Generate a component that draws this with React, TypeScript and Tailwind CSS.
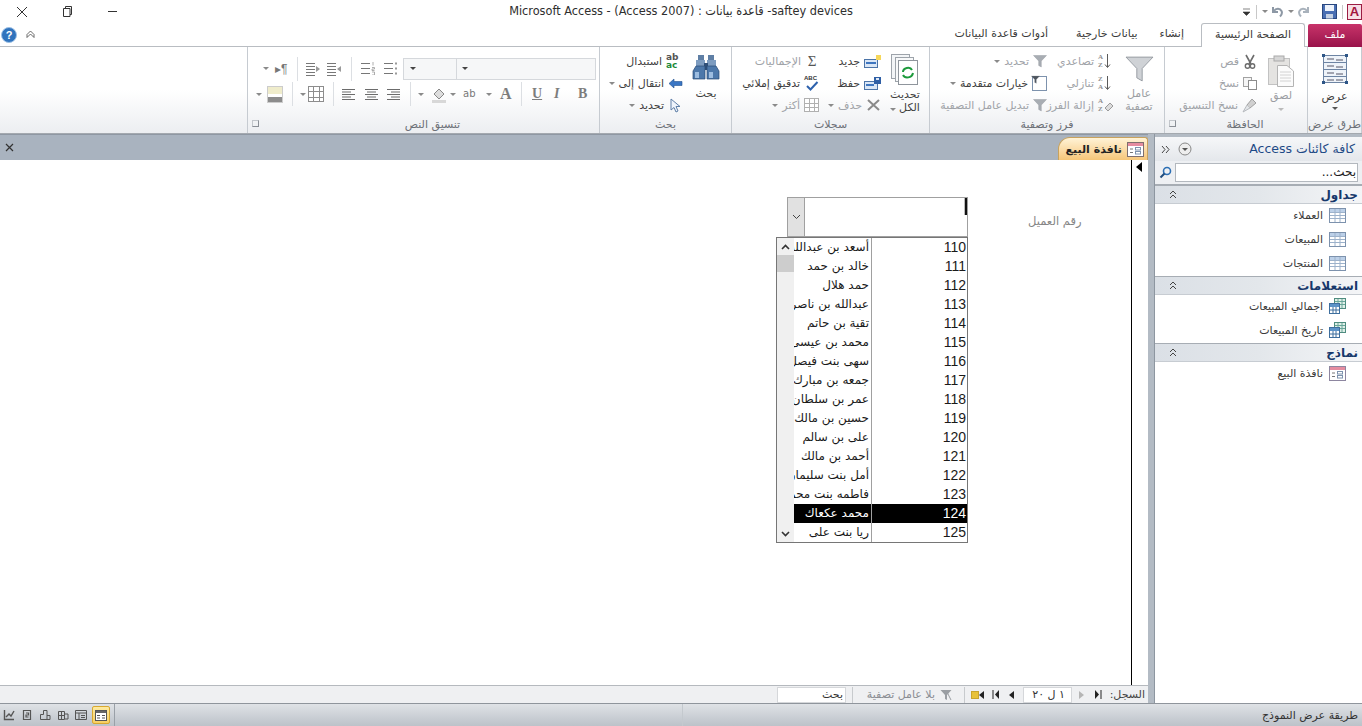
import type { ReactNode } from "react"

const ar = "font-['DejaVu_Sans','Noto_Sans',sans-serif]"

function Caret({ className = "" }: { className?: string }) {
  return <span className={`inline-block shrink-0 w-0 h-0 border-x-[3px] border-x-transparent border-t-[3px] border-t-[#8a8a8a] ${className}`} />
}

function Sep({ className = "" }: { className?: string }) {
  return <span className={`inline-block shrink-0 w-px h-[24px] bg-[#dcdfe3] ${className}`} />
}

function Ico({ w = 16, h = 16, children, className = "" }: { w?: number; h?: number; children: ReactNode; className?: string }) {
  return (
    <svg width={w} height={h} viewBox={`0 0 ${w} ${h}`} fill="none" className={`shrink-0 ${className}`}>
      {children}
    </svg>
  )
}

function Lines({ kind }: { kind: "l" | "c" | "r" }) {
  const rows: [number, number][] =
    kind === "l" ? [[1, 14], [1, 10], [1, 14], [1, 10], [1, 14]] : kind === "r" ? [[1, 14], [5, 14], [1, 14], [5, 14], [1, 14]] : [[1, 14], [3, 12], [1, 14], [3, 12], [1, 14]]
  return (
    <Ico w={15} h={13}>
      {rows.map(([a, b], i) => (
        <path key={i} d={`M${a} ${1.5 + i * 2.5}H${b}`} stroke="#6b6b6b" />
      ))}
    </Ico>
  )
}

function IndentIcon({ dir }: { dir: "in" | "out" }) {
  return (
    <Ico w={16} h={14}>
      <path d="M1 1.5H10M1 4.5H10M1 7.5H10M1 10.5H10M1 13.5H10" stroke="#777" />
      <path d={dir === "in" ? "M11 4L15 7L11 10Z" : "M15 4L11 7L15 10Z"} fill="#9a9a9a" />
    </Ico>
  )
}

function ListIcon({ dots }: { dots: boolean }) {
  return (
    <Ico w={16} h={13}>
      <path d="M1 1.5H10M1 6.5H10M1 11.5H10" stroke="#777" />
      {dots ? (
        <path d="M12 0.5H14V2.5H12ZM12 5.5H14V7.5H12ZM12 10.5H14V12.5H12Z" fill="#999" />
      ) : (
        <path d="M13 0V3.5M12 5.5H14.5V7H12V8.5H14.5M12 10H14.5V13H12" stroke="#999" strokeWidth=".8" />
      )}
    </Ico>
  )
}

function Grid({ w = 16, h = 16, color = "#8d8d8d" }: { w?: number; h?: number; color?: string }) {
  return (
    <Ico w={w} h={h}>
      <rect x=".5" y=".5" width={w - 1} height={h - 1} fill="#fff" stroke={color} />
      <path d={`M${Math.round(w / 3) + 0.5} 1V${h - 1}M${Math.round((2 * w) / 3) + 0.5} 1V${h - 1}M1 ${Math.round(h / 3) + 0.5}H${w - 1}M1 ${Math.round((2 * h) / 3) + 0.5}H${w - 1}`} stroke={color} />
    </Ico>
  )
}

function TableIcon() {
  return (
    <Ico w={17} h={15}>
      <rect x=".5" y=".5" width="16" height="14" fill="#fff" stroke="#7d92ad" />
      <rect x="1" y="1" width="15" height="3" fill="#bcd0e8" />
      <path d="M6 1V14M11 1V14M1 4.5H16M1 7.5H16M1 10.5H16" stroke="#9db2cb" />
    </Ico>
  )
}

function QueryIcon() {
  return (
    <Ico w={17} h={16}>
      <rect x="5.5" y=".5" width="11" height="10" fill="#dff0e8" stroke="#4f8c80" />
      <path d="M6 3.5H16M9 1V10M13 1V10M6 6.5H16" stroke="#6aa69a" />
      <rect x=".5" y="5.5" width="10" height="10" fill="#fff" stroke="#3e6f9e" />
      <rect x="1" y="6" width="9" height="3" fill="#5c93c8" />
      <path d="M4 9V15M7 9V15M1 12H10" stroke="#3e6f9e" />
    </Ico>
  )
}

function FormIcon({ active = false }: { active?: boolean }) {
  return (
    <Ico w={17} h={15}>
      <rect x=".5" y=".5" width="16" height="14" fill="#fff" stroke={active ? "#7d6f6f" : "#8d86a0"} />
      <rect x="1" y="1" width="15" height="3" fill="#e58ca0" />
      <path d="M3 7H6M3 10.5H6" stroke="#777" />
      <rect x="8.5" y="5.5" width="5" height="2.5" stroke="#7d92ad" />
      <rect x="8.5" y="9.5" width="5" height="2.5" stroke="#7d92ad" />
    </Ico>
  )
}

function Funnel({ size = 14, color = "#a8adb3" }: { size?: number; color?: string }) {
  return (
    <svg width={size} height={size} viewBox="0 0 14 14" className="shrink-0">
      <path d="M.5 1.5H13.5L8.3 7V13L5.7 11.5V7Z" fill={color} stroke="#8a9097" strokeWidth=".4" />
    </svg>
  )
}

function SortIcon({ up, eraser }: { up: boolean; eraser?: boolean }) {
  return (
    <span className={`flex items-center gap-px w-[16px] shrink-0 ${ar}`}>
      <span className="flex flex-col text-[7px] leading-[8px] font-bold text-[#8f8f8f] font-['Liberation_Serif',serif]">
        <span>{up ? "A" : "Z"}</span>
        <span>{up ? "Z" : "A"}</span>
      </span>
      {eraser ? (
        <Ico w={9} h={14}>
          <path d="M1 10L6 5L9 8L4 13Z" fill="#dcdcdc" stroke="#9a9a9a" />
        </Ico>
      ) : (
        <Ico w={7} h={16}>
          <path d="M3.5 1V14M1 11.5L3.5 14.5L6 11.5" stroke="#5a5a5a" />
        </Ico>
      )}
    </span>
  )
}

function Group({ width, label, launcher, children }: { width: string; label: string; launcher?: boolean; children: ReactNode }) {
  return (
    <div className={`${width} shrink-0 flex flex-col border-r border-[#c6cbd1]`}>
      <div className="flex-1 min-h-0 relative">{children}</div>
      <div className={`h-[18px] relative flex items-center justify-center ${launcher ? "pl-[18px]" : ""}`}>
        {launcher && (
          <span className="absolute left-[4px] top-[5px] w-[7px] h-[7px] border border-[#c2c6cb] border-r-[#8a8f96] border-b-[#8a8f96]" />
        )}
        <span dir="rtl" className="text-[11px] leading-none text-[#6c7077]">
          {label}
        </span>
      </div>
    </div>
  )
}

function RItem({ text, icon, arrow, dim }: { text: string; icon: ReactNode; arrow?: boolean; dim?: boolean }) {
  return (
    <div className="h-[22px] flex items-center gap-[4px]">
      {arrow && <Caret />}
      <span dir="rtl" className={`text-[11px] leading-none whitespace-nowrap ${dim ? "text-[#a0a3a8]" : "text-[#3f3f3f]"}`}>
        {text}
      </span>
      {icon}
    </div>
  )
}

function TitleBar() {
  return (
    <div className="h-[23px] shrink-0 grid grid-cols-[140px_1fr_140px] items-center">
      <div className="flex items-center">
        <Ico w={12} h={12} className="ml-[16px]">
          <path d="M1 1L11 11M11 1L1 11" stroke="#333" />
        </Ico>
        <Ico w={11} h={11} className="ml-[35px]">
          <path d="M2.5 2.5V.5H8.5V8.5H7M.5 2.5H7V10.5H.5Z" stroke="#333" />
        </Ico>
        <span className="ml-[34px] w-[9px] h-px bg-[#333]" />
      </div>
      <div dir="ltr" className="text-center text-[12.6px] text-[#2e2e2e] whitespace-nowrap font-['DejaVu_Sans_Condensed','DejaVu_Sans',sans-serif]">
        Microsoft Access - (Access 2007) : قاعدة بيانات -saftey devices
      </div>
      <div className="flex items-center justify-end">
        <Ico w={7} h={8}>
          <path d="M0 1H7M0 4H7L3.5 7.5Z" fill="#333" stroke="#333" strokeWidth=".6" />
        </Ico>
        <span className="ml-[6px] w-px h-[14px] bg-[#c8c8c8]" />
        <Caret className="ml-[5px]" />
        <Ico w={14} h={13} className="ml-[2px]">
          <path d="M3 2V7H8M3.5 6.5C6 3 10 3 11.5 6C12.5 8 11.5 10 10 11.5" stroke="#8d98a5" strokeWidth="2" />
        </Ico>
        <Caret className="ml-[4px]" />
        <Ico w={14} h={13} className="ml-[3px]">
          <path d="M11 2V7H6M10.5 6.5C8 3 4 3 2.5 6C1.5 8 2.5 10 4 11.5" stroke="#a9b2bc" strokeWidth="2" />
        </Ico>
        <Ico w={15} h={15} className="ml-[11px]">
          <rect x=".5" y=".5" width="14" height="14" fill="#4a6fb3" stroke="#29477f" />
          <rect x="3" y="1" width="9" height="6" fill="#eef3fb" />
          <rect x="4" y="10" width="7" height="4.5" fill="#c7d2e3" />
        </Ico>
        <span className="ml-[5px] w-px h-[14px] bg-[#c8c8c8]" />
        <span className="ml-[4px] w-[15px] h-[16px] border border-[#9c1d43] bg-[#f6dfe6] text-[#a3123e] text-[13px] leading-[14px] font-bold text-center font-['Liberation_Sans',sans-serif]">
          A
        </span>
      </div>
    </div>
  )
}

function Tabs() {
  return (
    <div className="h-[24px] shrink-0 flex items-end border-b border-[#b9bdc2] relative">
      <div className="flex items-center self-center pl-[1px]">
        <span className="w-[16px] h-[16px] rounded-full bg-[#2f73bd] border border-[#9cc0e6] text-white text-[11px] leading-[14px] font-bold text-center font-['Liberation_Sans',sans-serif]">
          ?
        </span>
        <Ico w={9} h={9} className="ml-[9px]">
          <path d="M1 4.5L4.5 1L8 4.5V7.5L4.5 4L1 7.5Z" fill="#fff" stroke="#444" strokeWidth=".8" />
        </Ico>
      </div>
      <div dir="rtl" className="ml-auto flex items-end text-[11px] text-[#3b3b3b] h-full">
        <span className="w-[54px] h-[23px] rounded-t-[2px] bg-gradient-to-b from-[#c8336a] to-[#99124a] text-white flex items-center justify-center mb-[-1px]">
          ملف
        </span>
        <span className="w-[104px] h-[24px] mr-[3px] mb-[-1px] rounded-t-[3px] border border-b-0 border-[#b9bdc2] bg-white flex items-center justify-center">
          الصفحة الرئيسية
        </span>
        <span className="h-[23px] mr-[17px] flex items-center">إنشاء</span>
        <span className="h-[23px] mr-[22px] flex items-center">بيانات خارجية</span>
        <span className="h-[23px] mr-[28px] flex items-center">أدوات قاعدة البيانات</span>
      </div>
    </div>
  )
}

function Ribbon() {
  const letter = "text-[14px] leading-none font-bold text-[#7d7d7d] font-['Liberation_Serif',serif]"
  return (
    <div className={`h-[87px] shrink-0 flex bg-gradient-to-b from-white via-white to-[#eceef1] border-b border-[#a4a9af] ${ar}`}>
      <div className="flex-1 border-r border-[#c6cbd1]" />

      <Group width="w-[352px]" label="تنسيق النص" launcher>
        <div className="pt-[9px]">
          <div className="h-[25px] flex items-center">
            <Caret className="ml-[15px]" />
            <span className="ml-[6px] w-[14px] text-[12px] leading-none text-[#777] font-['Liberation_Sans',sans-serif]">▸¶</span>
            <Sep className="ml-[8px]" />
            <span className="ml-[7px]"><IndentIcon dir="in" /></span>
            <span className="ml-[5px]"><IndentIcon dir="out" /></span>
            <Sep className="ml-[9px]" />
            <span className="ml-[8px]"><ListIcon dots={false} /></span>
            <span className="ml-[7px]"><ListIcon dots /></span>
            <div className="ml-[4px] w-[54px] h-[22px] border border-[#d5d8dc] bg-[#f6f7f8] flex items-center pl-[6px]">
              <Caret className="border-t-[#444]" />
            </div>
            <div className="w-[139px] h-[22px] border border-l-0 border-[#d5d8dc] bg-[#f6f7f8] flex items-center pl-[5px]">
              <Caret className="border-t-[#444]" />
            </div>
          </div>
          <div className="h-[26px] flex items-center">
            <Caret className="ml-[8px]" />
            <span className="ml-[5px] w-[16px] h-[17px] border border-[#ccc] bg-[linear-gradient(#efeccb_0_50%,#fff_50%_70%,#8c8c8c_70%)]" />
            <Sep className="ml-[9px]" />
            <Caret className="ml-[7px]" />
            <span className="ml-[2px]"><Grid w={16} h={16} /></span>
            <Sep className="ml-[9px]" />
            <span className="ml-[7px]"><Lines kind="l" /></span>
            <span className="ml-[8px]"><Lines kind="c" /></span>
            <span className="ml-[7px]"><Lines kind="r" /></span>
            <Sep className="ml-[9px]" />
            <Caret className="ml-[7px]" />
            <Ico w={16} h={17} className="ml-[7px]">
              <path d="M3 8L8 3L13 8L8 13Z" fill="#ddd" stroke="#888" />
              <rect x="1" y="14" width="14" height="3" fill="#d8d8d8" />
            </Ico>
            <Caret className="ml-[3px]" />
            <span className="ml-[7px] w-[16px] text-[10px] leading-none text-[#777]">ab</span>
            <Caret className="ml-[7px]" />
            <span className="ml-[8px] w-[12px] text-[16px] leading-none font-bold text-[#7d7d7d] font-['Liberation_Serif',serif]">A</span>
            <Sep className="ml-[9px]" />
            <span className={`ml-[10px] w-[10px] underline ${letter}`}>U</span>
            <span className={`ml-[12px] w-[8px] italic ${letter}`}>I</span>
            <span className={`ml-[16px] w-[10px] ${letter}`}>B</span>
          </div>
        </div>
      </Group>

      <Group width="w-[132px]" label="بحث">
        <div className="flex pt-[3px] pl-[5px]">
          <div className="flex flex-col items-end w-[78px]">
            <RItem
              text="استبدال"
              icon={
                <span className="w-[17px] text-[9px] leading-[8px] font-bold text-[#555] shrink-0">
                  ab
                  <br />
                  <span className="text-[#1d8a3a]">ac</span>
                </span>
              }
            />
            <RItem
              text="انتقال إلى"
              arrow
              icon={
                <Ico w={15} h={11}>
                  <path d="M1 5.5L6 1V3.5H14V7.5H6V10Z" fill="#3a76c4" stroke="#24528f" strokeWidth=".6" />
                </Ico>
              }
            />
            <RItem
              text="تحديد"
              arrow
              icon={
                <Ico w={15} h={15}>
                  <path d="M3 1V12L6 9.5L8 14L10 13L8 8.5H12Z" fill="#eef3fb" stroke="#5f7fa8" />
                </Ico>
              }
            />
          </div>
          <div className="flex flex-col items-center ml-[3px] pt-[4px] w-[40px]">
            <Ico w={28} h={26}>
              <rect x="6" y="1" width="6" height="5" fill="#5f7fa5" />
              <rect x="16" y="1" width="6" height="5" fill="#5f7fa5" />
              <rect x="4" y="6" width="9" height="7" fill="#7d9cc0" />
              <rect x="15" y="6" width="9" height="7" fill="#7d9cc0" />
              <rect x="12" y="9" width="4" height="7" fill="#2f4f78" />
              <path d="M4 12H13V25H1V17Z" fill="#4d78aa" stroke="#284a75" strokeWidth=".7" />
              <path d="M15 12H24L27 17V25H15Z" fill="#4d78aa" stroke="#284a75" strokeWidth=".7" />
              <rect x="3" y="18" width="4" height="6" fill="#9dbde0" />
              <rect x="17" y="18" width="4" height="6" fill="#9dbde0" />
            </Ico>
            <span className="text-[11px] mt-[8px] leading-none text-[#3f3f3f]">بحث</span>
          </div>
        </div>
      </Group>

      <Group width="w-[198px]" label="سجلات">
        <div className="flex pt-[3px] pl-[21px]">
          <div className="flex flex-col items-end w-[66px]">
            <RItem text="الإجماليات" dim icon={<span className="w-[14px] text-center text-[15px] leading-none text-[#555] font-['Liberation_Serif',serif]">Σ</span>} />
            <RItem
              text="تدقيق إملائي"
              icon={
                <span className="relative w-[15px] h-[16px] shrink-0">
                  <span className="absolute left-0 top-0 text-[6px] leading-none font-bold text-[#333] font-['Liberation_Sans',sans-serif]">ABC</span>
                  <Ico w={14} h={10} className="absolute left-[1px] top-[6px]">
                    <path d="M2 5L5.5 8.5L12.5 1" stroke="#2e62ad" strokeWidth="2" />
                  </Ico>
                </span>
              }
            />
            <RItem text="أكثر" dim arrow icon={<Grid w={15} h={14} color="#b0b0b0" />} />
          </div>
          <div className="flex flex-col items-end w-[62px]">
            <RItem
              text="جديد"
              icon={
                <Ico w={17} h={13}>
                  <rect x=".5" y="4.5" width="13" height="8" fill="#dbe7f6" stroke="#4c74a8" />
                  <rect x="2" y="7" width="10" height="2" fill="#3e76c0" />
                  <rect x="12" y="0" width="5" height="5" fill="#f6d75a" />
                </Ico>
              }
            />
            <RItem
              text="حفظ"
              icon={
                <Ico w={17} h={13}>
                  <rect x=".5" y="4.5" width="13" height="8" fill="#dbe7f6" stroke="#4c74a8" />
                  <rect x="2" y="7" width="8" height="2" fill="#3e76c0" />
                  <rect x="10" y="0" width="7" height="7" fill="#2f5fa5" />
                  <rect x="12" y="1" width="3" height="2" fill="#dfe8f5" />
                </Ico>
              }
            />
            <RItem
              text="حذف"
              dim
              arrow
              icon={
                <Ico w={15} h={14}>
                  <path d="M2 2L13 12M13 2L2 12" stroke="#8a8a8a" strokeWidth="2" />
                </Ico>
              }
            />
          </div>
          <div className="flex flex-col items-center pt-[3px] w-[48px]">
            <Ico w={30} h={32}>
              <rect x="1.5" y="1.5" width="18" height="24" fill="#f3f5f7" stroke="#9da3aa" />
              <rect x="5.5" y="4.5" width="18" height="24" fill="#f8f9fa" stroke="#9da3aa" />
              <rect x="8.5" y="7.5" width="19" height="24" fill="#fff" stroke="#8f959c" />
              <path d="M13 19C13 15 20 13 22 17M23 20C22 25 15 26 13 22" stroke="#1d9a3c" strokeWidth="2" />
            </Ico>
            <span dir="rtl" className="text-[11px] leading-[13px] text-center text-[#3f3f3f] mt-[3px]">
              تحديث
              <br />
              الكل
              <Caret className="mr-[3px]" />
            </span>
          </div>
        </div>
      </Group>

      <Group width="w-[235px]" label="فرز وتصفية">
        <div className="flex pt-[3px] pl-[9px]">
          <div className="flex flex-col items-end w-[108px]">
            <RItem text="تحديد" dim arrow icon={<Funnel />} />
            <RItem
              text="خيارات متقدمة"
              arrow
              icon={
                <span className="relative w-[15px] h-[15px] shrink-0 border border-[#7d92ad] bg-[#fff]">
                  <span className="absolute left-[-2px] top-[-2px]"><Funnel size={9} color="#4d555e" /></span>
                </span>
              }
            />
            <RItem text="تبديل عامل التصفية" dim icon={<Funnel />} />
          </div>
          <div className="flex flex-col items-end w-[67px]">
            <RItem text="تصاعدي" dim icon={<SortIcon up />} />
            <RItem text="تنازلي" dim icon={<SortIcon up={false} />} />
            <RItem text="إزالة الفرز" dim icon={<SortIcon up eraser />} />
          </div>
          <div className="flex flex-col items-center ml-[4px] pt-[4px] w-[42px]">
            <Funnel size={29} color="#cfd2d6" />
            <span dir="rtl" className="text-[11px] leading-[13px] text-center text-[#9b9ea3] mt-[4px]">
              عامل
              <br />
              تصفية
            </span>
          </div>
        </div>
      </Group>

      <Group width="w-[143px]" label="الحافظة" launcher>
        <div className="flex pt-[3px] pl-[6px]">
          <div className="flex flex-col items-end w-[86px]">
            <RItem
              text="قص"
              dim
              icon={
                <Ico w={14} h={15}>
                  <path d="M3 1L8 10M11 1L6 10" stroke="#6d6d6d" strokeWidth="1.6" />
                  <circle cx="4.5" cy="12" r="2.2" stroke="#6d6d6d" strokeWidth="1.4" />
                  <circle cx="9.5" cy="12" r="2.2" stroke="#6d6d6d" strokeWidth="1.4" />
                </Ico>
              }
            />
            <RItem
              text="نسخ"
              dim
              icon={
                <Ico w={14} h={13}>
                  <rect x=".5" y=".5" width="8" height="9" fill="#f6f6f6" stroke="#a2a2a2" />
                  <rect x="5.5" y="3.5" width="8" height="9" fill="#fff" stroke="#8c8c8c" />
                </Ico>
              }
            />
            <RItem
              text="نسخ التنسيق"
              dim
              icon={
                <Ico w={15} h={15}>
                  <path d="M10 1L14 5L8 10L5 7Z" fill="#d0d0d0" stroke="#a0a0a0" />
                  <path d="M5 7L1 14L8 10" fill="#e4e7ea" stroke="#b5b9bd" />
                </Ico>
              }
            />
          </div>
          <div className="flex flex-col items-center ml-[2px] pt-[5px] w-[44px]">
            <Ico w={28} h={32}>
              <rect x="1.5" y="3.5" width="21" height="26" fill="#e4e3e1" stroke="#c2c2c2" />
              <rect x="7" y="1" width="10" height="5" fill="#d6d6d6" stroke="#aaa" />
              <path d="M10.5 10.5H20L26.5 16V31.5H10.5Z" fill="#fbfbfb" stroke="#b4b4b4" />
              <path d="M13 17H24M13 20H24M13 23H24M13 26H24" stroke="#d2d2d2" />
            </Ico>
            <span className="text-[11px] leading-none text-[#9b9ea3] mt-[3px]">لصق</span>
            <Caret className="mt-[7px] border-t-[#bbb]" />
          </div>
        </div>
      </Group>

      <Group width="w-[54px]" label="طرق عرض">
        <div className="flex flex-col items-center pt-[7px]">
          <Ico w={26} h={30}>
            <rect x="1.5" y="1.5" width="23" height="27" fill="#eef3f9" stroke="#6d84a3" />
            <path d="M2 8.5H24M2 15.5H24M2 22.5H24" stroke="#6d84a3" />
            <path d="M5 5H12M14 6H21M5 12H12M14 13H21M5 19H12M14 20H21M5 26H12M14 26H21" stroke="#556" />
            <rect x="0" y="0" width="3" height="3" fill="#2e5687" />
            <rect x="23" y="0" width="3" height="3" fill="#2e5687" />
            <rect x="0" y="27" width="3" height="3" fill="#2e5687" />
            <rect x="23" y="27" width="3" height="3" fill="#2e5687" />
          </Ico>
          <span className="text-[11px] leading-none text-[#3f3f3f] mt-[7px]">عرض</span>
          <Caret className="mt-[5px] border-t-[#555]" />
        </div>
      </Group>
    </div>
  )
}

const rows: [string, string][] = [
  ["110", "أسعد بن عبدالله"],
  ["111", "خالد بن حمد"],
  ["112", "حمد هلال"],
  ["113", "عبدالله بن ناصر"],
  ["114", "تقية بن حاتم"],
  ["115", "محمد بن عيسى"],
  ["116", "سهى بنت فيصل"],
  ["117", "جمعه بن مبارك"],
  ["118", "عمر بن سلطان"],
  ["119", "حسين بن مالك"],
  ["120", "على بن سالم"],
  ["121", "أحمد بن مالك"],
  ["122", "أمل بنت سليمان"],
  ["123", "فاطمه بنت محمد"],
  ["124", "محمد عكعاك"],
  ["125", "ريا بنت على"],
]

function Dropdown() {
  return (
    <div className="absolute left-[776px] top-[77px] w-[192px] h-[306px] border border-[#767676] bg-white flex">
      <div className="w-[17px] shrink-0 bg-[#f0f0f0] flex flex-col">
        <div className="h-[17px] flex items-center justify-center">
          <Ico w={9} h={6}>
            <path d="M1 5L4.5 1.5L8 5" stroke="#333" strokeWidth="1.6" />
          </Ico>
        </div>
        <div className="h-[17px] bg-[#cdcdcd]" />
        <div className="flex-1" />
        <div className="h-[17px] flex items-center justify-center">
          <Ico w={9} h={6}>
            <path d="M1 1L4.5 4.5L8 1" stroke="#333" strokeWidth="1.6" />
          </Ico>
        </div>
      </div>
      <div className="flex-1 min-w-0">
        {rows.map(([num, name]) => {
          const on = num === "124"
          return (
            <div key={num} className={`h-[19px] flex text-[13px] leading-[19px] ${on ? "bg-black text-white" : "text-[#1a1a1a]"}`}>
              <div dir="rtl" className={`w-[78px] shrink-0 overflow-hidden whitespace-nowrap pr-[2px] border-r border-[#a0a0a0] text-[12px] ${ar}`}>
                {name}
              </div>
              <div className="flex-1 text-right pr-[1px] font-['Liberation_Sans',sans-serif] text-[14px]">{num}</div>
            </div>
          )
        })}
      </div>
    </div>
  )
}

function FormCanvas() {
  return (
    <div className="flex-1 relative bg-white min-h-0">
      <div className="absolute left-[787px] top-[37px] w-[181px] h-[40px] border border-[#a0a0a0] bg-white flex justify-between">
        <div className="w-[17px] bg-[#e1e1e1] border-r border-[#a0a0a0] flex items-center justify-center">
          <Ico w={9} h={6}>
            <path d="M1 1L4.5 4.5L8 1" stroke="#444" />
          </Ico>
        </div>
        <span className="w-[3px] h-[17px] bg-[linear-gradient(90deg,#bbb_0_33%,#111_33%)]" />
      </div>
      <span dir="rtl" className={`absolute left-[1028px] top-[53px] text-[11.5px] leading-[16px] text-[#858585] ${ar}`}>
        رقم العميل
      </span>
      <Dropdown />
    </div>
  )
}

function NavBar() {
  return (
    <div className={`h-[18px] shrink-0 border-t border-[#b5b9be] bg-[#eff0f2] flex items-center text-[11px] text-[#8a8d92] ${ar}`}>
      <div className="ml-[777px] w-[69px] h-[16px] border border-[#d5d7da] bg-white text-right pr-[2px] leading-[14px] text-[#333]">بحث</div>
      <span className="ml-[6px] w-px h-[16px] bg-[#c7cacd]" />
      <div dir="rtl" className="ml-[13px] w-[69px] whitespace-nowrap leading-none">بلا عامل تصفية</div>
      <Ico w={12} h={12} className="ml-[5px]">
        <path d="M.5 1H11.5L7 6V11L5 10V6Z" fill="#9a9ea3" />
        <path d="M7 3L11 11" stroke="#9a9ea3" />
      </Ico>
      <span className="ml-[12px] w-px h-[16px] bg-[#c7cacd]" />
      <span className="ml-[6px] w-[8px] h-[8px] bg-[#e8c23a] border border-[#c9a52e]" />
      <span className="w-0 h-0 border-y-[4px] border-y-transparent border-r-[5px] border-r-[#222]" />
      <Ico w={7} h={9} className="ml-[8px]">
        <path d="M1 0V9" stroke="#222" />
        <path d="M7 0V9L3 4.5Z" fill="#222" />
      </Ico>
      <span className="ml-[10px] w-0 h-0 border-y-[4px] border-y-transparent border-r-[5px] border-r-[#222]" />
      <div dir="rtl" className="ml-[9px] w-[49px] h-[16px] border border-[#d5d7da] bg-white pr-[6px] leading-[14px] text-[#333]">١ ل ٢٠</div>
      <span className="ml-[7px] w-0 h-0 border-y-[4px] border-y-transparent border-l-[5px] border-l-[#b5b5b5]" />
      <Ico w={7} h={9} className="ml-[11px]">
        <path d="M0 0V9L4 4.5Z" fill="#222" />
        <path d="M6 0V9" stroke="#222" />
      </Ico>
      <span dir="rtl" className="ml-[6px] w-[37px] whitespace-nowrap leading-none text-[#444]">السجل:</span>
    </div>
  )
}

function NavSection({ title, items }: { title: string; items: { name: string; icon: ReactNode }[] }) {
  return (
    <div className="border-t border-[#a7adb4] first:border-t-0">
      <div className="h-[18px] flex items-center justify-between pl-[14px] pr-[4px] bg-gradient-to-r from-[#dbe0e6] via-[#e3e7eb] to-[#f4f5f7] border-b border-[#c7ccd2]">
        <Ico w={8} h={9}>
          <path d="M1 4L4 1L7 4M1 8L4 5L7 8" stroke="#444" />
        </Ico>
        <span dir="rtl" className="text-[12px] leading-none font-bold text-[#17386b]">{title}</span>
      </div>
      <div className="-mt-[1px] pb-[1px]">
        {items.map((it) => (
          <div key={it.name} className="h-[24px] flex items-center justify-end gap-[6px] pr-[16px]">
            <span dir="rtl" className="text-[11px] leading-none text-[#3a3a3a]">{it.name}</span>
            {it.icon}
          </div>
        ))}
      </div>
    </div>
  )
}

function NavPane() {
  return (
    <div className={`w-[208px] shrink-0 flex flex-col bg-white border-l border-[#8d96a0] ${ar}`}>
      <div className="h-[27px] shrink-0 flex items-center pl-[6px] pr-[7px] border-t-[3px] border-[#b3bbc4] bg-gradient-to-b from-[#f6f7f9] to-[#e4e7eb]">
        <Ico w={9} h={9}>
          <path d="M1 1L4 4.5L1 8M5 1L8 4.5L5 8" stroke="#444" />
        </Ico>
        <Ico w={14} h={14} className="ml-[8px]">
          <circle cx="7" cy="7" r="6" fill="#eee" stroke="#888" />
          <path d="M4 6H10L7 9Z" fill="#555" />
        </Ico>
        <span dir="rtl" className="ml-auto text-[12.5px] leading-none text-[#1e4a86]">كافة كائنات Access</span>
      </div>
      <div className="h-[24px] shrink-0 flex items-center pl-[4px] pr-[4px] bg-[#eef0f3] border-b border-[#a7adb4]">
        <Ico w={13} h={13}>
          <circle cx="8" cy="5" r="3.5" stroke="#2c6fb4" strokeWidth="1.6" />
          <path d="M5.5 7.5L1.5 11.5" stroke="#1f4c7d" strokeWidth="2" />
        </Ico>
        <div dir="rtl" className="ml-[3px] flex-1 h-[19px] border border-[#b3b8be] bg-white text-[12px] leading-[17px] text-[#222] pr-[1px]">بحث...</div>
      </div>
      <NavSection
        title="جداول"
        items={[
          { name: "العملاء", icon: <TableIcon /> },
          { name: "المبيعات", icon: <TableIcon /> },
          { name: "المنتجات", icon: <TableIcon /> },
        ]}
      />
      <NavSection
        title="استعلامات"
        items={[
          { name: "اجمالي المبيعات", icon: <QueryIcon /> },
          { name: "تاريخ المبيعات", icon: <QueryIcon /> },
        ]}
      />
      <NavSection title="نماذج" items={[{ name: "نافذة البيع", icon: <FormIcon /> }]} />
    </div>
  )
}

function StatusBar() {
  const s = "#555"
  const icons = [
    <path key="a" d="M1.5 1V10.5H11M3 8L6 5L8 7L11 2" stroke={s} strokeWidth="1.4" />,
    <path key="b" d="M2.5 1.5H9.5V10.5H2.5ZM5 4H7.5V6H5V8H7.5" stroke={s} strokeWidth="1.2" />,
    <path key="c" d="M1.5 10.5V5.5H4.5V1.5H8V10.5M8 6.5H11V10.5H1.5" stroke={s} />,
    <path key="d" d="M1.5 2.5H7.5V10.5H1.5ZM1.5 6.5H7.5M4.5 2.5V10.5M8 5H11V10H8" stroke={s} />,
    <path key="e" d="M.5 1.5H11.5V10.5H.5ZM.5 4H11.5M4 4V10.5M6 6.5H10M6 8.5H10" stroke={s} />,
  ]
  return (
    <div className={`h-[23px] shrink-0 flex items-center border-t border-[#8f959c] bg-gradient-to-b from-[#dfe2e6] to-[#bcc2c9] ${ar}`}>
      <div className="flex items-center">
        {icons.map((d, i) => (
          <span key={i} className="w-[18px] flex justify-center">
            <Ico w={12} h={12}>{d}</Ico>
          </span>
        ))}
        <span className="w-[18px] h-[18px] ml-[2px] rounded-[2px] border border-[#d9a92f] bg-gradient-to-b from-[#fdeaa0] to-[#f8cf62] flex items-center justify-center">
          <Ico w={12} h={11}>
            <rect x=".5" y=".5" width="11" height="10" fill="#fff" stroke="#555" />
            <rect x="1" y="1" width="10" height="2" fill="#666" />
            <path d="M2 5.5H5M2 8H5M7 5.5H10M7 8H10" stroke="#555" />
          </Ico>
        </span>
        <span className="ml-[4px] w-px h-[22px] bg-[#9aa0a7]" />
      </div>
      <span className="ml-[567px] w-px h-[22px] bg-[#c4c9ce]" />
      <span dir="rtl" className="ml-auto mr-[4px] text-[11px] leading-none text-[#333]">طريقة عرض النموذج</span>
    </div>
  )
}

export default function App() {
  return (
    <div className={`w-[1362px] h-[726px] overflow-hidden flex flex-col bg-white ${ar}`}>
      <TitleBar />
      <Tabs />
      <Ribbon />
      <div className="flex-1 min-h-0 flex">
        <div className="w-[1148px] shrink-0 flex flex-col">
          <div className="h-[26px] shrink-0 bg-[#a9b3bf] flex items-end justify-between pl-[5px] border-t border-[#8f98a3]">
            <Ico w={9} h={9} className="mb-[8px]">
              <path d="M1 1L8 8M8 1L1 8" stroke="#333" strokeWidth="1.2" />
            </Ico>
            <div className="w-[90px] h-[23px] rounded-tl-[12px] rounded-tr-[3px] bg-gradient-to-b from-[#fff3d6] to-[#f6c678] border border-b-0 border-[#c8a25e] flex items-center justify-end gap-[5px] pr-[3px]">
              <span dir="rtl" className="text-[11px] leading-none font-bold text-[#222]">نافذة البيع</span>
              <FormIcon active />
            </div>
          </div>
          <div className="flex-1 min-h-0 flex">
            <FormCanvas />
            <div className="w-[17px] shrink-0 border-l border-black bg-white pl-[4px] pt-[2px]">
              <span className="block w-0 h-0 border-y-[5px] border-y-transparent border-r-[6px] border-r-black" />
            </div>
          </div>
          <NavBar />
        </div>
        <div className="w-[6px] shrink-0 bg-[#b3bbc4]" />
        <NavPane />
      </div>
      <StatusBar />
    </div>
  )
}
